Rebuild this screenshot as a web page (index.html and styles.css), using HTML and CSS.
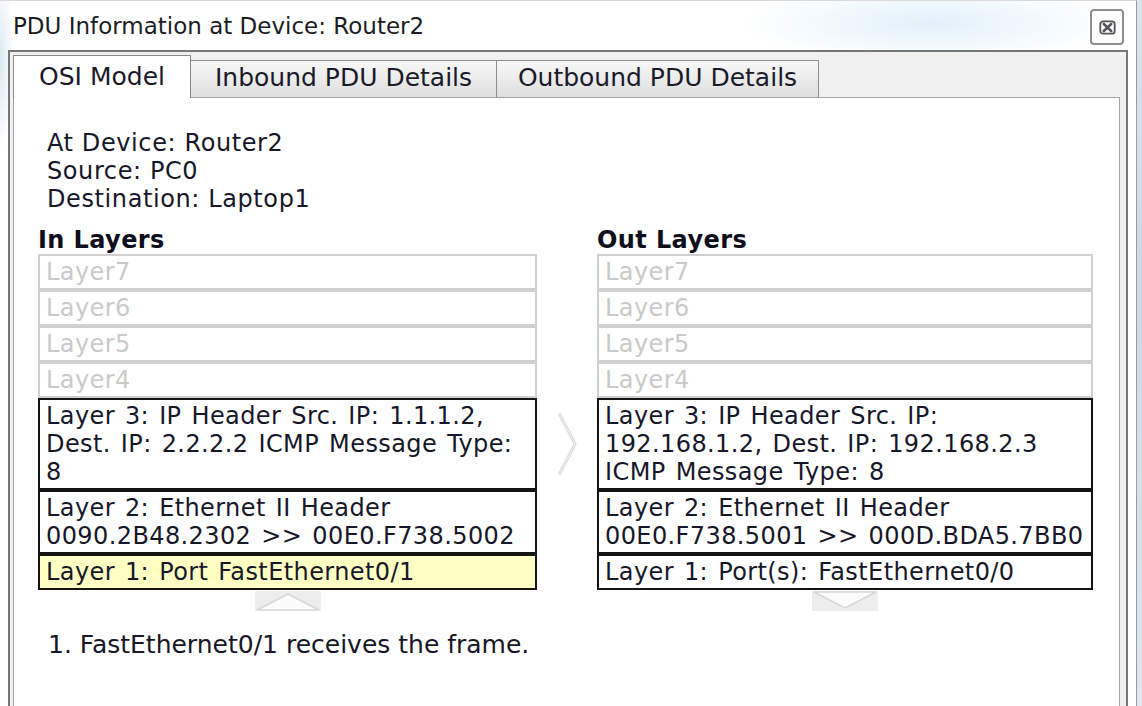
FILE: index.html
```html
<!DOCTYPE html>
<html lang="en">
<head>
<meta charset="utf-8">
<title>PDU Information at Device: Router2</title>
<link rel="stylesheet" href="styles.css">
</head>
<body>
<div class="window">
  <header class="titlebar">
    <h1 class="title">PDU Information at Device: Router2</h1>
    <button class="close" aria-label="Close">
      <svg width="17" height="15" viewBox="0 0 17 15"><rect x="1.3" y="1.3" width="14.4" height="12.4" rx="2.8" fill="none" stroke="#55555e" stroke-width="1.8"/><path d="M4.8 4l7.4 7M12.2 4l-7.4 7" stroke="#55555e" stroke-width="2.6" stroke-linecap="round"/></svg>
    </button>
  </header>
  <div class="frame">
    <nav class="tabs">
      <div class="tab active">OSI Model</div>
      <div class="tab inbound">Inbound PDU Details</div>
      <div class="tab outbound">Outbound PDU Details</div>
    </nav>
    <section class="panel">
      <div class="info">
        <div>At Device: Router2</div>
        <div>Source: PC0</div>
        <div>Destination: Laptop1</div>
      </div>
      <div class="layers">
        <div class="col">
          <h2 class="col-title">In Layers</h2>
          <div class="layer dim">Layer7</div>
          <div class="layer dim">Layer6</div>
          <div class="layer dim">Layer5</div>
          <div class="layer dim">Layer4</div>
          <div class="layer">Layer 3: IP Header Src. IP: 1.1.1.2,<br>Dest. IP: 2.2.2.2 ICMP Message Type:<br>8</div>
          <div class="layer">Layer 2: Ethernet II Header<br>0090.2B48.2302 &gt;&gt; 00E0.F738.5002</div>
          <div class="layer current">Layer 1: Port FastEthernet0/1</div>
          <div class="step">
            <svg width="66" height="20" viewBox="0 0 66 20"><rect width="66" height="20" fill="#ededed"/><polygon points="2,19 33,3 64,19" fill="#fbfbfb" stroke="#d6d6d6" stroke-width="1.5"/></svg>
          </div>
        </div>
        <div class="mid">
          <svg width="20" height="64" viewBox="0 0 20 64"><polyline points="2,1 18,32 2,63" fill="none" stroke="#dadada" stroke-width="3"/><polyline points="2,1 18,32 2,63" fill="none" stroke="#f4f4f4" stroke-width="1"/></svg>
        </div>
        <div class="col">
          <h2 class="col-title">Out Layers</h2>
          <div class="layer dim">Layer7</div>
          <div class="layer dim">Layer6</div>
          <div class="layer dim">Layer5</div>
          <div class="layer dim">Layer4</div>
          <div class="layer">Layer 3: IP Header Src. IP:<br>192.168.1.2, Dest. IP: 192.168.2.3<br>ICMP Message Type: 8</div>
          <div class="layer">Layer 2: Ethernet II Header<br>00E0.F738.5001 &gt;&gt; 000D.BDA5.7BB0</div>
          <div class="layer">Layer 1: Port(s): FastEthernet0/0</div>
          <div class="step">
            <svg width="66" height="20" viewBox="0 0 66 20"><rect width="66" height="20" fill="#ededed"/><polygon points="2,1 33,17 64,1" fill="#fbfbfb" stroke="#d6d6d6" stroke-width="1.5"/></svg>
          </div>
        </div>
      </div>
      <p class="desc">1. FastEthernet0/1 receives the frame.</p>
    </section>
  </div>
</div>
</body>
</html>
```

FILE: styles.css
```css
html, body {
  margin: 0;
  padding: 0;
}

body {
  width: 1142px;
  height: 706px;
  overflow: hidden;
  background: linear-gradient(180deg, #d9e6f0 0%, #c9d9e6 40%, #dfe8ef 100%);
  font-family: "DejaVu Sans", Verdana, sans-serif;
  color: #17172a;
}

.window {
  width: 1137px;
  height: 706px;
  box-sizing: border-box;
  border-top: 1px solid #dadada;
  border-right: 1px solid #9c9c9c;
  background:
    radial-gradient(ellipse 190px 40px at 930px 22px, #e1f0fa 0%, rgba(235,246,252,0.6) 60%, rgba(255,255,255,0) 100%),
    radial-gradient(ellipse 14px 90px at 0px 60px, #dbe9f3 0%, rgba(255,255,255,0) 100%),
    #ffffff;
  display: flex;
  flex-direction: column;
}

.titlebar {
  height: 49px;
  flex: none;
  display: flex;
  justify-content: space-between;
  align-items: flex-start;
  padding: 0 12px 0 13px;
}

.title {
  margin: 11px 0 0;
  font-family: "DejaVu Sans", sans-serif;
  font-weight: normal;
  font-size: 23px;
  line-height: 28px;
  color: #1c1c24;
}

.close {
  margin-top: 8px;
  width: 34px;
  height: 36px;
  padding: 0;
  box-sizing: border-box;
  border: 2px solid #8e8e8e;
  border-radius: 4px;
  background: #fdfdfd;
  display: flex;
  align-items: center;
  justify-content: center;
}

.frame {
  flex: 1;
  margin-left: 8px;
  width: 1120px;
  box-sizing: border-box;
  border: 2px solid #767676;
  border-bottom: none;
  background: #f0f0f0;
  padding: 3px 6px 0 3px;
  display: flex;
  flex-direction: column;
}

.tabs {
  display: flex;
  align-items: flex-end;
  height: 43px;
  margin-bottom: -1px;
  position: relative;
  z-index: 1;
}

.tab {
  box-sizing: border-box;
  font-size: 25px;
  line-height: 28px;
  text-align: center;
  color: #1a1a2a;
  white-space: nowrap;
}

.tab.active {
  width: 178px;
  height: 43px;
  padding-top: 7px;
  background: #ffffff;
  border: 1px solid #8a8a8a;
  border-bottom: none;
}

.tab.inbound,
.tab.outbound {
  height: 38px;
  padding-top: 3px;
  border: 1px solid #8c8c8c;
  border-left: none;
  border-bottom-color: #a0a0a0;
  background: linear-gradient(180deg, #f7f7f7 0%, #ebebeb 50%, #dedede 100%);
}

.tab.inbound {
  width: 306px;
}

.tab.outbound {
  width: 322px;
}

.panel {
  flex: 1;
  background: #ffffff;
  border: 1px solid #a4a4a4;
  border-bottom: none;
  padding: 31px 0 0 24px;
}

.info {
  padding-left: 9px;
  font-size: 24px;
  line-height: 28px;
  letter-spacing: 0.6px;
}

.layers {
  margin-top: 13px;
  display: grid;
  grid-template-columns: 499px 60px 496px;
}

.col-title {
  margin: 0;
  font-size: 24px;
  font-weight: bold;
  line-height: 28px;
  letter-spacing: 0.4px;
  color: #0e0e1c;
}

.layer {
  border: 2px solid #141414;
  padding: 2px 6px;
  font-size: 24px;
  line-height: 28px;
  letter-spacing: 0.4px;
  word-spacing: 2px;
  white-space: nowrap;
  overflow: hidden;
}

.layer.dim {
  border-color: #d0d0d0;
  color: #cacaca;
}

.layer.current {
  background: #ffffc4;
}

.step {
  width: 66px;
  height: 20px;
  margin: 1px auto 0;
}

.step svg,
.mid svg {
  display: block;
}

.mid {
  padding-top: 186px;
  display: flex;
  justify-content: center;
}

.desc {
  margin: 20px 0 0 10px;
  font-size: 25px;
  line-height: 28px;
  color: #161626;
}
```
